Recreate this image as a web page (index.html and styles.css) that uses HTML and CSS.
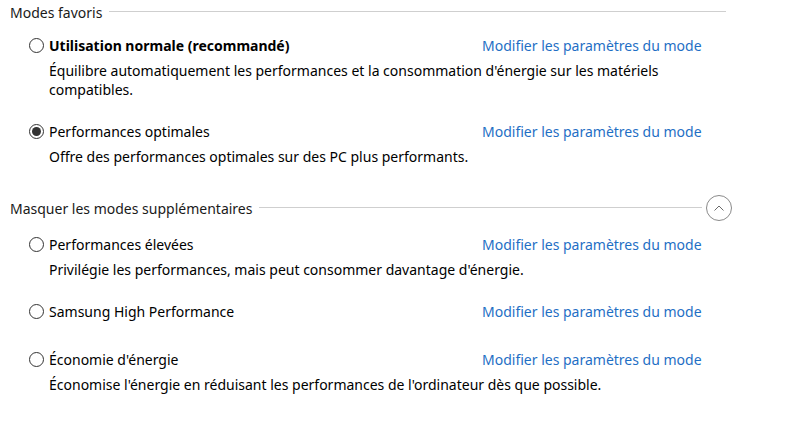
FILE: index.html
```html
<!DOCTYPE html>
<html lang="fr">
<head>
    <meta charset="UTF-8">
    <title>Modes d'alimentation</title>
    <link rel="stylesheet" href="styles.css">
</head>
<body>
    <div class="panel">
        <div class="section-head">
            <span class="section-title">Modes favoris</span>
            <span class="rule rule-short"></span>
        </div>

        <div class="mode">
            <div class="mode-row">
                <span class="radio"></span>
                <span class="mode-name strong">Utilisation normale (recommandé)</span>
                <a class="mode-link" href="#">Modifier les paramètres du mode</a>
            </div>
            <p class="mode-desc">Équilibre automatiquement les performances et la consommation d'énergie sur les matériels compatibles.</p>
        </div>

        <div class="mode">
            <div class="mode-row">
                <span class="radio checked"></span>
                <span class="mode-name">Performances optimales</span>
                <a class="mode-link" href="#">Modifier les paramètres du mode</a>
            </div>
            <p class="mode-desc">Offre des performances optimales sur des PC plus performants.</p>
        </div>

        <div class="section-head more">
            <span class="section-title">Masquer les modes supplémentaires</span>
            <span class="rule"></span>
            <button class="collapse-btn" type="button">
                <svg width="12" height="8" viewBox="0 0 12 8"><path d="M1.5 6.5 L6 2 L10.5 6.5" fill="none" stroke="#6a6a6a" stroke-width="1"/></svg>
            </button>
        </div>

        <div class="mode">
            <div class="mode-row">
                <span class="radio"></span>
                <span class="mode-name">Performances élevées</span>
                <a class="mode-link" href="#">Modifier les paramètres du mode</a>
            </div>
            <p class="mode-desc">Privilégie les performances, mais peut consommer davantage d'énergie.</p>
        </div>

        <div class="mode">
            <div class="mode-row">
                <span class="radio"></span>
                <span class="mode-name">Samsung High Performance</span>
                <a class="mode-link" href="#">Modifier les paramètres du mode</a>
            </div>
            <p class="mode-desc"></p>
        </div>

        <div class="mode">
            <div class="mode-row">
                <span class="radio"></span>
                <span class="mode-name">Économie d'énergie</span>
                <a class="mode-link" href="#">Modifier les paramètres du mode</a>
            </div>
            <p class="mode-desc">Économise l'énergie en réduisant les performances de l'ordinateur dès que possible.</p>
        </div>
    </div>
</body>
</html>
```

FILE: styles.css
```css
body {
    margin: 0;
    background: #fff;
    font-family: "Noto Sans", "Segoe UI", sans-serif;
    font-size: 14px;
    line-height: 19px;
    color: #000;
}

.panel {
    padding: 3px 0 0 10px;
    width: 722px;
}

.section-head {
    display: flex;
    align-items: center;
    height: 19px;
    margin-bottom: 14px;
}

.section-head.more {
    margin-top: 33px;
    margin-bottom: 17px;
}

.section-title {
    color: #1a1a1a;
    white-space: nowrap;
}

.rule {
    flex: 1;
    height: 1px;
    background: #cfcfcf;
    margin-left: 7px;
    margin-top: -2px;
}

.rule-short {
    margin-right: 6px;
}

.collapse-btn {
    width: 26px;
    height: 26px;
    margin: -4px 0 -3px 4px;
    padding: 0;
    border: 1px solid #8a8a8a;
    border-radius: 50%;
    background: #fff;
    display: flex;
    align-items: center;
    justify-content: center;
}

.mode {
    padding-left: 19px;
    margin-bottom: 23px;
}

.mode-row {
    display: flex;
    align-items: center;
    height: 19px;
}

.radio {
    width: 13px;
    height: 13px;
    border: 1px solid #333;
    border-radius: 50%;
    margin-right: 5px;
    flex-shrink: 0;
    display: flex;
    align-items: center;
    justify-content: center;
}

.radio.checked::after {
    content: "";
    width: 9px;
    height: 9px;
    border-radius: 50%;
    background: #333;
}

.mode-name {
    width: 433px;
}

.mode-name.strong {
    font-weight: bold;
}

.mode-link {
    color: #1f6fc5;
    text-decoration: none;
    white-space: nowrap;
}

.mode-desc {
    margin: 0 0 0 20px;
    padding-top: 6px;
    width: 640px;
}
```
